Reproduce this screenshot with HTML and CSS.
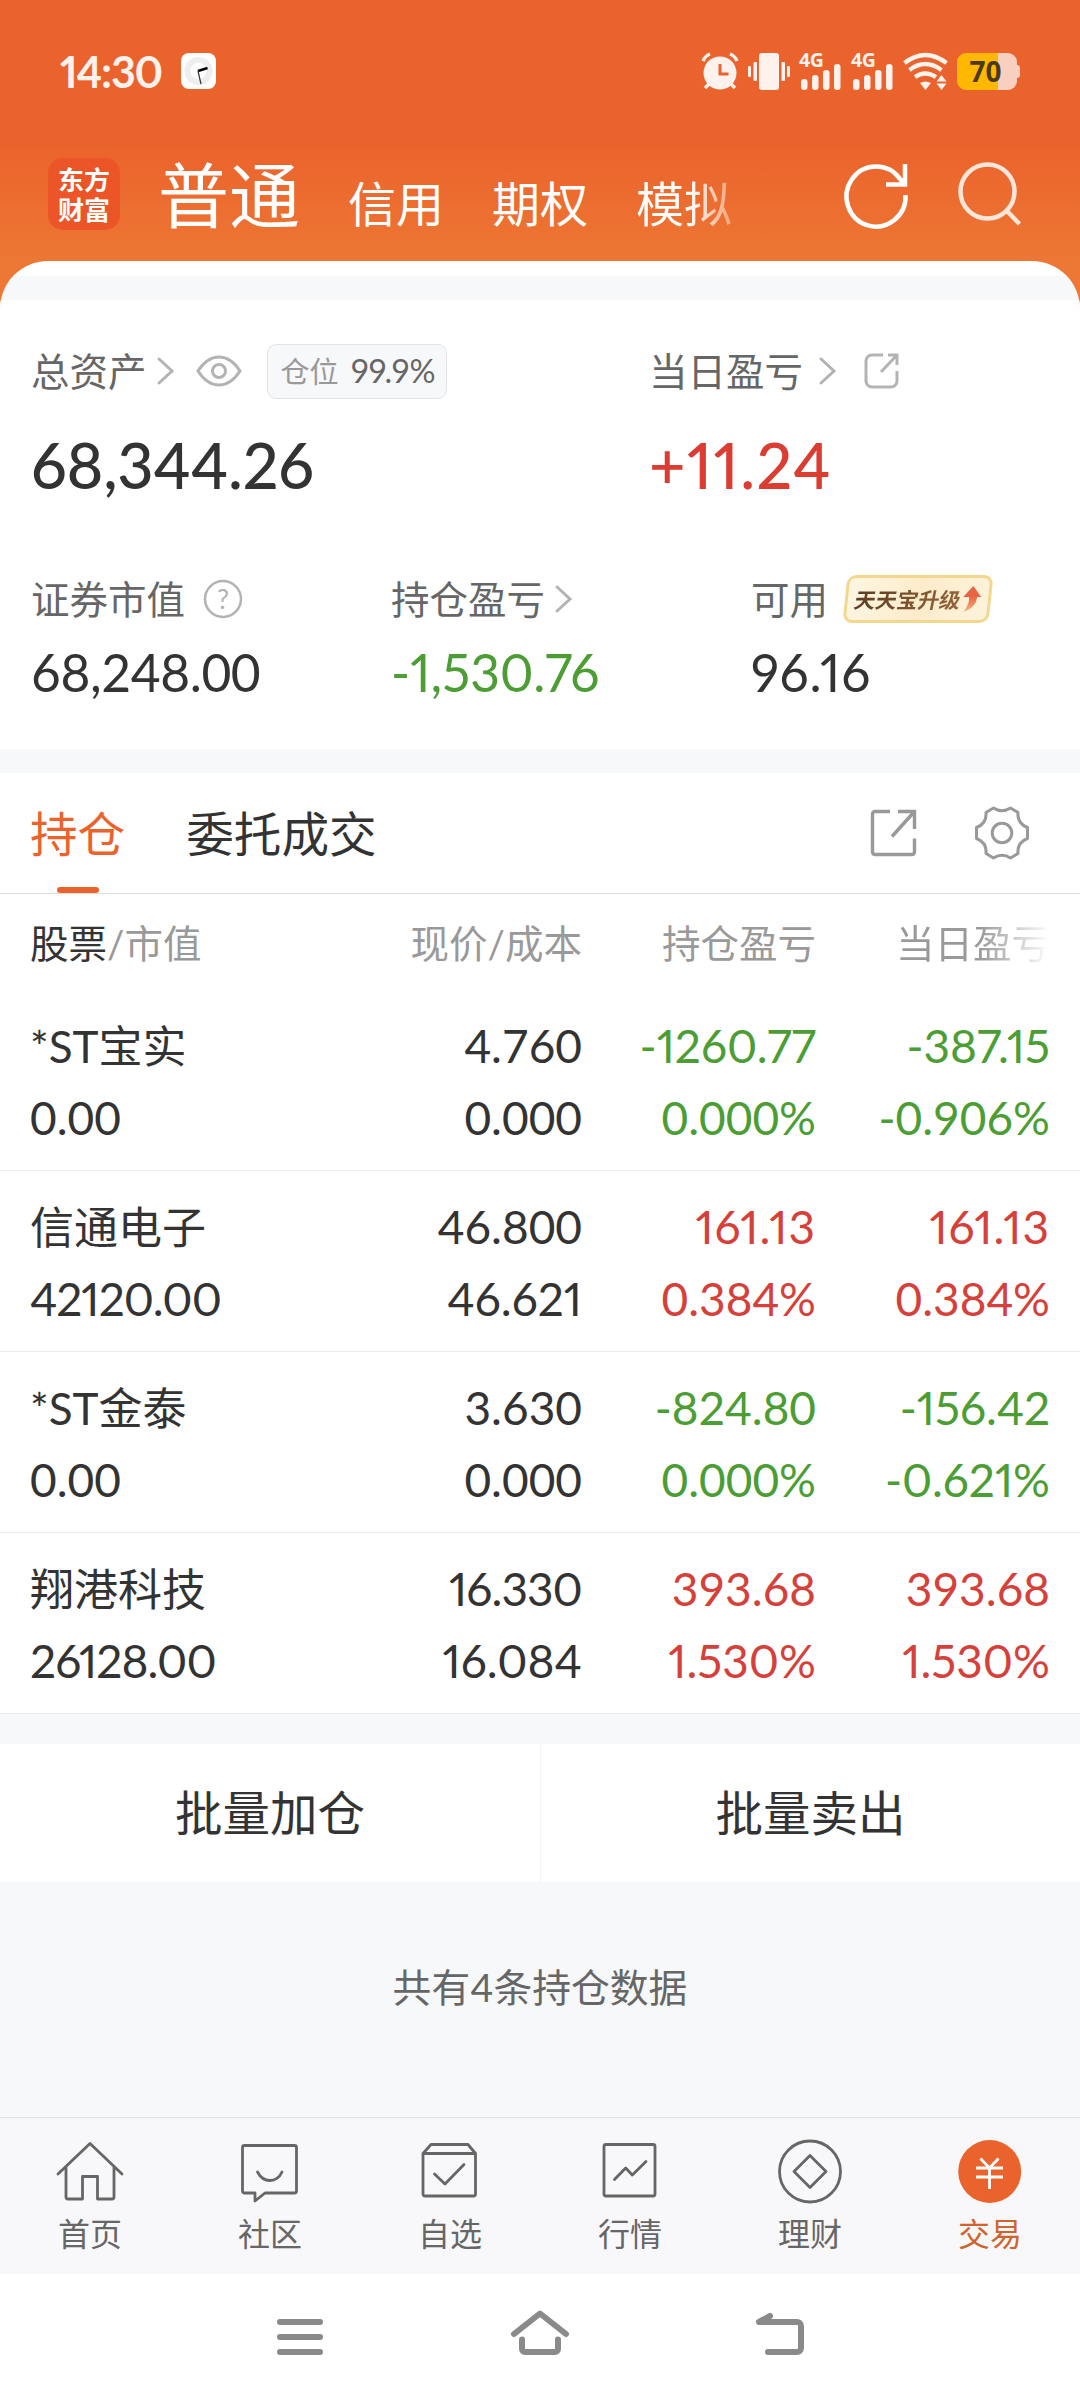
FILE: index.html
```html
<!DOCTYPE html>
<html lang="zh-CN">
<head>
    <meta charset="UTF-8">
    <meta name="viewport" content="width=device-width, initial-scale=1.0">
    <title>交易 - 持仓</title>
    <link rel="stylesheet" href="styles.css">
</head>
<body>
    <div id="app">
        <header class="top">
            <!-- Status bar -->
            <div class="status-bar">
                <span class="time">14:30</span>
                <svg class="mini-clock" width="35" height="36" viewBox="0 0 35 36">
                    <rect width="35" height="36" rx="8" fill="#fff"/>
                    <circle cx="17.500" cy="18" r="11" fill="none" stroke="#eee" stroke-width="6"/>
                    <path d="M17 18l9.500-3" stroke="#000" stroke-width="2.500"/>
                    <path d="M17 18l3 13" stroke="#333" stroke-width="1.200"/>
                </svg>
                <div class="status-icons">
                    <svg width="38" height="38" viewBox="0 0 38 38" fill="none" stroke="#fff1eb">
                        <circle cx="19" cy="21" r="16.500" fill="#fff1eb" stroke="none"/>
                        <path d="M2 9q2-5 7-7M36 9q-2-5-7-7M8 32l-4 4M30 32l4 4" stroke-width="3.500"/>
                        <path d="M19 12v10h8.500" stroke="#eb632c" stroke-width="3"/>
                    </svg>
                    <svg width="42" height="38" viewBox="0 0 42 38" fill="#fff1eb">
                        <rect x="11" y="1" width="20" height="37" rx="3"/>
                        <rect x="5.500" y="10" width="3.500" height="19" rx="1"/>
                        <rect x="0" y="14" width="3" height="11" rx="1"/>
                        <rect x="33.500" y="10" width="3.500" height="19" rx="1"/>
                        <rect x="39" y="14" width="3" height="11" rx="1"/>
                    </svg>
                    <svg width="43" height="38" viewBox="0 0 43 38" fill="#fff1eb">
                        <text class="net" x="0" y="15">4G</text>
                        <rect x="2" y="27" width="6.500" height="11" rx="3"/>
                        <rect x="13" y="23" width="6.500" height="15" rx="3"/>
                        <rect x="24" y="18" width="6.500" height="20" rx="3"/>
                        <rect x="35" y="12" width="6.500" height="26" rx="3"/>
                    </svg>
                    <svg width="43" height="38" viewBox="0 0 43 38" fill="#fff1eb">
                        <text class="net" x="0" y="15">4G</text>
                        <rect x="2" y="27" width="6.500" height="11" rx="3"/>
                        <rect x="13" y="23" width="6.500" height="15" rx="3"/>
                        <rect x="24" y="18" width="6.500" height="20" rx="3"/>
                        <rect x="35" y="12" width="6.500" height="26" rx="3"/>
                    </svg>
                    <svg width="45" height="38" viewBox="0 0 45 38" fill="none" stroke="#fff1eb" stroke-width="4.200">
                        <path d="M1.500 11Q22-5 43.500 11M6.500 18Q22 6 38.500 18M12 25Q22 18 33 25"/>
                        <path d="M17 31q5.500-3 11 0l-5.500 7zM33.500 29.500l5-6.500 5 6.500zM33.500 31.500l5 6.500 5-6.500z" fill="#fff1eb" stroke="none"/>
                    </svg>
                    <div class="battery"><span>70</span></div>
                </div>
            </div>

            <!-- Account tabs -->
            <div class="title-bar">
                <div class="logo"><span>东方</span><span>财富</span></div>
                <div class="accounts">
                    <span class="account active">普通</span>
                    <span class="account">信用</span>
                    <span class="account">期权</span>
                    <span class="account faded">模拟</span>
                </div>
                <svg class="refresh" width="64" height="66" viewBox="0 0 64 66" fill="none" stroke="#fff" stroke-width="4.500">
                    <path d="M60.500 34A29.500 30 0 1 1 55 18L60 24"/>
                    <path d="M60 3V23.500H41"/>
                </svg>
                <svg class="search" width="64" height="66" viewBox="0 0 64 66" fill="none" stroke="#ffe6d9" stroke-width="4.500">
                    <circle cx="29.500" cy="30.500" r="27"/>
                    <path d="M48 49L61.500 63"/>
                </svg>
            </div>
        </header>

        <main class="sheet">
            <!-- Asset summary -->
            <section class="summary">
                <div class="summary-main">
                    <div class="metric">
                        <div class="label">
                            <span>总资产</span>
                            <svg class="chevron near" width="18" height="28" viewBox="0 0 18 28"><path d="M2 2L15 14L2 26"/></svg>
                            <svg class="eye" width="46" height="32" viewBox="0 0 46 32" fill="none" stroke="#b3b3b3" stroke-width="3">
                                <path d="M2 16Q11 2 23 2T44 16Q35 30 23 30T2 16z"/>
                                <circle cx="23" cy="16" r="6.500"/>
                            </svg>
                            <span class="chip">仓位 <b>99.9%</b></span>
                        </div>
                        <div class="big">68,344.26</div>
                    </div>
                    <div class="metric">
                        <div class="label">
                            <span>当日盈亏</span>
                            <svg class="chevron far" width="18" height="28" viewBox="0 0 18 28"><path d="M2 2L15 14L2 26"/></svg>
                            <svg class="share-small" width="36" height="36" viewBox="0 0 36 36" fill="none" stroke="#b3b3b3" stroke-width="3">
                                <path d="M19 2H8a6 6 0 0 0-6 6V28a6 6 0 0 0 6 6H27a6 6 0 0 0 6-6V18"/>
                                <path d="M24 2H33V12M33 2L17 19"/>
                            </svg>
                        </div>
                        <div class="big up loose">+11.24</div>
                    </div>
                </div>
                <div class="summary-sub">
                    <div class="metric">
                        <div class="label">
                            <span>证券市值</span>
                            <svg class="help" width="40" height="40" viewBox="0 0 40 40">
                                <circle cx="20" cy="20" r="18" fill="none" stroke="#b3b3b3" stroke-width="2.500"/>
                                <text x="20" y="29.500" text-anchor="middle">?</text>
                            </svg>
                        </div>
                        <div class="mid even">68,248.00</div>
                    </div>
                    <div class="metric">
                        <div class="label">
                            <span>持仓盈亏</span>
                            <svg class="chevron near" width="18" height="28" viewBox="0 0 18 28"><path d="M2 2L15 14L2 26"/></svg>
                        </div>
                        <div class="mid down">-1,530.76</div>
                    </div>
                    <div class="metric">
                        <div class="label">
                            <span>可用</span>
                            <div class="promo">
                                <span>天天宝升级</span>
                                <svg width="19" height="26" viewBox="0 0 19 26">
                                    <defs>
                                        <linearGradient id="arrow" x1="0" y1="0" x2="0" y2="1">
                                            <stop offset="0.400" stop-color="#ea6443"/>
                                            <stop offset="1" stop-color="#f6b27c"/>
                                        </linearGradient>
                                    </defs>
                                    <path d="M9 0L18 11H14Q14 21 2 26Q7 18 6 11H0z" fill="url(#arrow)"/>
                                </svg>
                            </div>
                        </div>
                        <div class="mid loose">96.16</div>
                    </div>
                </div>
            </section>

            <!-- Positions -->
            <section class="positions">
                <div class="tabs">
                    <span class="tab active">持仓</span>
                    <span class="tab">委托成交</span>
                    <svg class="share" width="48" height="48" viewBox="0 0 48 48" fill="none" stroke="#999" stroke-width="3.400">
                        <path d="M20 2.500H5a2.500 2.500 0 0 0-2.500 2.500V43a2.500 2.500 0 0 0 2.500 2.500H42a2.500 2.500 0 0 0 2.500-2.500V29.500"/>
                        <path d="M28 2.500H44.500V20M44 3L22 27.500"/>
                    </svg>
                    <svg class="gear" width="56" height="56" viewBox="0 0 56 56" fill="none" stroke="#999" stroke-width="3" stroke-linejoin="round">
                        <path d="M19.500 3Q28 8.500 36.500 3L44 7.500Q43 18.500 53.500 22.500V33.500Q43 37.500 44 48.500L36.500 53Q28 47.500 19.500 53L12 48.500Q13 37.500 2.500 33.500V22.500Q13 18.500 12 7.500z"/>
                        <circle cx="28" cy="28" r="9.800"/>
                    </svg>
                </div>
                <div class="row head">
                    <span><em>股票</em>/市值</span>
                    <span>现价/成本</span>
                    <span>持仓盈亏</span>
                    <span class="head-fade">当日盈亏</span>
                </div>
                <div class="row">
                    <span>*ST宝实</span><span>4.760</span><span class="down prop">-1260.77</span><span class="down prop">-387.15</span>
                    <span>0.00</span><span>0.000</span><span class="down">0.000%</span><span class="down">-0.906%</span>
                </div>
                <div class="row">
                    <span>信通电子</span><span>46.800</span><span class="up prop loose">161.13</span><span class="up prop loose">161.13</span>
                    <span class="prop tight">42120.00</span><span class="prop">46.621</span><span class="up">0.384%</span><span class="up">0.384%</span>
                </div>
                <div class="row">
                    <span>*ST金泰</span><span>3.630</span><span class="down">-824.80</span><span class="down prop">-156.42</span>
                    <span>0.00</span><span>0.000</span><span class="down">0.000%</span><span class="down prop">-0.621%</span>
                </div>
                <div class="row">
                    <span>翔港科技</span><span class="prop tight">16.330</span><span class="up">393.68</span><span class="up">393.68</span>
                    <span class="prop tight">26128.00</span><span class="prop">16.084</span><span class="up prop">1.530%</span><span class="up prop">1.530%</span>
                </div>
            </section>

            <div class="batch">
                <span>批量加仓</span>
                <span>批量卖出</span>
            </div>
            <p class="count">共有4条持仓数据</p>
        </main>

        <!-- Bottom tabs -->
        <nav class="tab-bar">
            <div class="item">
                <svg width="72" height="72" viewBox="0 0 72 72">
                    <path d="M4 39L36 8.500L68 39M12 32V62a2 2 0 0 0 2 2H28.500V41.500H43.500V64H58a2 2 0 0 0 2-2V32"/>
                </svg>
                <span>首页</span>
            </div>
            <div class="item">
                <svg width="72" height="72" viewBox="0 0 72 72">
                    <path d="M10.500 10.500H60.500a2 2 0 0 1 2 2V56a2 2 0 0 1-2 2H31L21 66V58H10.500a2 2 0 0 1-2-2V12.500a2 2 0 0 1 2-2z"/>
                    <path d="M23.500 37Q28 45.500 36 45.500T48 37"/>
                </svg>
                <span>社区</span>
            </div>
            <div class="item">
                <svg width="72" height="72" viewBox="0 0 72 72">
                    <path d="M9 18.500L17 9.500H54L61.500 18.500V59a2 2 0 0 1-2 2H11a2 2 0 0 1-2-2zH61.500M20.500 39L31 49L50 29.500"/>
                </svg>
                <span>自选</span>
            </div>
            <div class="item">
                <svg width="72" height="72" viewBox="0 0 72 72">
                    <rect x="10" y="9.500" width="51" height="51.500" rx="2"/>
                    <path d="M20.500 44.500L31.700 33L38.300 40L52 26.500"/>
                </svg>
                <span>行情</span>
            </div>
            <div class="item">
                <svg width="72" height="72" viewBox="0 0 72 72">
                    <circle cx="36" cy="36.500" r="30.500"/>
                    <path d="M36 20.500L52 36.500L36 52.500L20 36.500z"/>
                </svg>
                <span>理财</span>
            </div>
            <div class="item active">
                <svg width="72" height="72" viewBox="0 0 72 72">
                    <circle class="fill" cx="35.700" cy="36.500" r="31.500"/>
                    <path class="yuan" d="M26.500 23.500L35.500 33L44.500 23.500M22 33H49M22 42H49M35.500 33V54"/>
                </svg>
                <span>交易</span>
            </div>
        </nav>

        <!-- System navigation -->
        <div class="sys-nav">
            <svg width="60" height="48" viewBox="0 0 60 48"><path d="M10 13H50M10 28H50M10 43H50"/></svg>
            <svg width="60" height="48" viewBox="0 0 60 48"><path d="M4 25L30 4.500L56 25M12 30.500V40a3 3 0 0 0 3 3H45a3 3 0 0 0 3-3V30.500"/></svg>
            <svg width="60" height="48" viewBox="0 0 60 48"><path d="M20 7L9 13H47a4 4 0 0 1 4 4V39a4 4 0 0 1-4 4H18"/></svg>
        </div>
    </div>
</body>
</html>
```
FILE: styles.css
```css
* {
    box-sizing: border-box;
}

body {
    margin: 0;
    font-family: Lato, "Noto Sans CJK SC", sans-serif;
    font-variant-numeric: proportional-nums;
    color: #333;
    background: #fff;
}

svg {
    display: block;
    flex-shrink: 0;
    overflow: visible;
}

#app {
    display: flex;
    flex-direction: column;
    width: 1080px;
    height: 2400px;
    background: #f7f8fa;
    overflow: hidden;
}

.up {
    color: #dc3d33;
}

.down {
    color: #4b9d34;
}

/* Header */
.top {
    height: 310px;
    flex-shrink: 0;
    background: linear-gradient(#eb632c 145px, #ed7734 261px);
}

.status-bar {
    display: flex;
    align-items: center;
    height: 142px;
    padding: 0 63px 0 60px;
}

.time {
    width: 121px;
    font-size: 43px;
    font-weight: 700;
    color: #fff1eb;
    letter-spacing: -1.2px;
}

.status-icons {
    display: flex;
    align-items: center;
    margin-left: auto;
    gap: 9px;
}

.net {
    font: 700 19.5px "Noto Sans", sans-serif;
    letter-spacing: -0.5px;
}

.battery {
    position: relative;
    width: 60px;
    height: 37px;
    border-radius: 9px;
    background: linear-gradient(90deg, #ffb800 41px, #f9cfc0 41px);
    font: 700 28px/37px "Noto Sans", sans-serif;
    color: #4b3a14;
    text-align: center;
}

.battery span {
    display: block;
    padding-right: 3px;
}

.battery::after {
    content: "";
    position: absolute;
    left: 60px;
    top: 12px;
    width: 3px;
    height: 13px;
    border-radius: 0 3px 3px 0;
    background: #f9cfc0;
}

.title-bar {
    display: flex;
    align-items: center;
    height: 103px;
    padding: 0 58px 0 48px;
    color: #fff;
}

.logo {
    display: flex;
    flex-direction: column;
    align-items: center;
    gap: 4px;
    width: 72px;
    height: 72px;
    padding-top: 8px;
    border-radius: 15px;
    background: #eb5527;
    font: 700 26px/26px "Noto Sans CJK SC", sans-serif;
}

.accounts {
    display: flex;
    align-items: baseline;
    margin-left: 38px;
    margin-top: 5px;
    font-family: "Noto Sans CJK SC", sans-serif;
    line-height: 80px;
}

.account {
    margin-right: 48px;
    font-size: 48px;
}

.account.active {
    margin-right: 48px;
    font-size: 71px;
}

.account.faded {
    margin-right: 0;
    background: linear-gradient(90deg, #fff 55%, #f5a276);
    background-clip: text;
    -webkit-background-clip: text;
    color: transparent;
}

.refresh {
    margin-left: auto;
}

.search {
    margin-left: 49px;
}

/* White sheet over the header */
.sheet {
    flex: 1;
    margin-top: -49px;
    padding-top: 15px;
    border-radius: 48px 48px 0 0;
    background: linear-gradient(#fff 15px, #f7f8fa 15px);
    overflow: hidden;
}

/* Asset summary */
.summary {
    height: 449px;
    margin-top: 24px;
    padding: 36px 0 0 31px;
    background: #fff;
}

.summary-main {
    display: grid;
    grid-template-columns: 618px 1fr;
}

.summary-sub {
    display: grid;
    grid-template-columns: 360px 360px 1fr;
    margin-top: 68px;
}

.label {
    display: flex;
    align-items: center;
    height: 70px;
    font-size: 38.5px;
    line-height: 70px;
    color: #666;
}

.chevron {
    fill: none;
    stroke: #b3b3b3;
    stroke-width: 3;
    stroke-linecap: round;
}

.chevron.near {
    margin-left: 10px;
}

.chevron.far {
    margin-left: 16px;
}

.eye {
    margin-left: 21px;
}

.share-small {
    margin-left: 27px;
}

.help {
    margin-left: 18px;
}

.help text {
    font: 27px Lato, sans-serif;
    fill: #b3b3b3;
}

.chip {
    width: 180px;
    height: 55px;
    margin-left: 25px;
    padding-left: 13px;
    border: 1px solid #e4e4e6;
    border-radius: 9px;
    background: #f7f8fa;
    font-size: 29px;
    line-height: 51px;
    white-space: nowrap;
    color: #999;
}

.chip b {
    margin-left: 5px;
    font-size: 32.5px;
    font-weight: 400;
    color: #666;
}

.big {
    height: 62px;
    margin-top: 28px;
    font-size: 63px;
    font-weight: 500;
    line-height: 62px;
    letter-spacing: -0.3px;
}

.big.loose {
    letter-spacing: 1.4px;
}

.mid {
    height: 60px;
    margin-top: 8px;
    font-size: 51.5px;
    line-height: 60px;
}

.mid.even {
    font-variant-numeric: tabular-nums;
    letter-spacing: -0.4px;
}

.mid.loose {
    letter-spacing: 0.8px;
}

.promo {
    display: flex;
    align-items: center;
    width: 146px;
    height: 48px;
    margin-left: 17px;
    padding-left: 7px;
    border: 3px solid #f3d78e;
    border-radius: 9px;
    background: linear-gradient(100deg, #fdf6e2, #fdeccb 50%, #fdf2da);
    transform: skewX(-6deg);
}

.promo span {
    background: linear-gradient(90deg, #5c3d22, #95643a);
    background-clip: text;
    -webkit-background-clip: text;
    color: transparent;
    font: 700 21.2px/42px "Noto Sans CJK SC", sans-serif;
    white-space: nowrap;
    transform: skewX(-6deg);
}

.promo svg {
    margin-left: 2px;
}

/* Positions table */
.positions {
    margin-top: 24px;
    background: #fff;
}

.tabs {
    display: flex;
    align-items: center;
    height: 121px;
    padding: 0 50px 0 30px;
    border-bottom: 1px solid #ddd;
    font-size: 47.6px;
}

.tab {
    position: relative;
    height: 120px;
    margin-right: 61px;
    line-height: 122px;
}

.tab.active {
    color: #eb632c;
}

.tab.active::after {
    content: "";
    position: absolute;
    left: 27px;
    bottom: 0;
    width: 42px;
    height: 6px;
    border-radius: 3px;
    background: #eb632c;
}

.share {
    margin-left: auto;
}

.gear {
    margin-left: 56px;
}

.row {
    display: grid;
    grid-template-columns: 318px 234px 234px 234px;
    grid-auto-rows: 72px;
    height: 181px;
    padding: 20px 30px 0;
    border-bottom: 1px solid #ebebeb;
    font-size: 46px;
    font-variant-numeric: tabular-nums;
    line-height: 72px;
}

.row span {
    text-align: right;
    white-space: nowrap;
}

.row span:nth-child(4n + 1) {
    text-align: left;
}

.row > span:first-child {
    font-size: 44px;
}

.row .up {
    color: #d5413a;
}

.row .prop {
    font-variant-numeric: proportional-nums;
}

.row .loose {
    letter-spacing: 1px;
}

.row .tight {
    letter-spacing: -0.9px;
}

.row.head {
    height: 96px;
    padding-top: 13px;
    border-bottom: none;
    color: #999;
}

.row.head > span {
    font-size: 38.5px;
}

.row.head em {
    font-style: normal;
    color: #333;
}

.row .head-fade {
    background: linear-gradient(90deg, #999 70%, #fff);
    background-clip: text;
    -webkit-background-clip: text;
    color: transparent;
}

.batch {
    display: grid;
    grid-template-columns: 1fr 1fr;
    height: 138px;
    margin-top: 30px;
    background: #fff;
    font-size: 47.5px;
    line-height: 138px;
    text-align: center;
}

.batch span + span {
    border-left: 1px solid #f4f4f5;
}

.count {
    margin: 77px 0 0;
    font-size: 38.8px;
    line-height: 56px;
    text-align: center;
    color: #666;
}

/* Bottom tabs */
.tab-bar {
    display: grid;
    grid-template-columns: repeat(6, 1fr);
    height: 157px;
    flex-shrink: 0;
    padding-top: 17px;
    border-top: 1px solid #e2e3e5;
    background: #f8f8fa;
    font-size: 32px;
    color: #666;
}

.item {
    display: flex;
    flex-direction: column;
    align-items: center;
    line-height: 54px;
}

.item svg {
    fill: none;
    stroke: #666;
    stroke-width: 2.8;
    stroke-linecap: round;
    stroke-linejoin: round;
}

.item.active {
    color: #d0642f;
}

.item .fill {
    fill: #eb632c;
    stroke: none;
}

.item .yuan {
    stroke: #fff;
    stroke-linecap: butt;
}

/* System navigation */
.sys-nav {
    display: flex;
    justify-content: center;
    gap: 180px;
    height: 126px;
    flex-shrink: 0;
    padding-top: 35px;
    background: #fff;
}

.sys-nav svg {
    fill: none;
    stroke: #8a8a8a;
    stroke-width: 6;
    stroke-linecap: round;
    stroke-linejoin: round;
}
```
